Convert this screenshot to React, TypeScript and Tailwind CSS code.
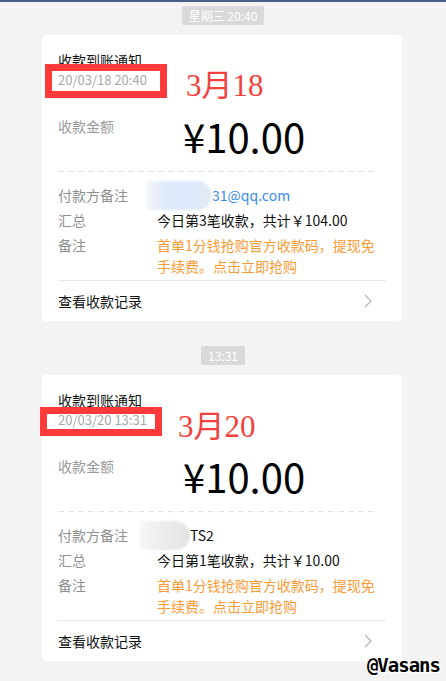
import React from "react";

type Notice = {
  time: string;
  date: string;
  mark: string;
  box: string;
  markPos: string;
  blob: string;
  payer: string;
  summary: string;
};

const NOTICES: Notice[] = [
  {
    time: "星期三 20:40",
    date: "20/03/18 20:40",
    mark: "3月18",
    box: "left-[3px] top-[29px] h-[34px]",
    markPos: "left-[144px] top-[33px]",
    blob: "-ml-[10px] w-[65px] bg-[linear-gradient(90deg,#f3f5f8_0%,#dde9fb_30%,#dde9fb_75%,#e6ebf2_100%)]",
    payer: "31@qq.com",
    summary: "今日第3笔收款，共计￥104.00",
  },
  {
    time: "13:31",
    date: "20/03/20 13:31",
    mark: "3月20",
    box: "-left-[2px] top-[32px] h-[29px]",
    markPos: "left-[136px] top-[34px]",
    blob: "-ml-[17px] w-[50px] bg-[linear-gradient(90deg,#f6f6f6_0%,#eeeeee_40%,#e4e4e4_100%)]",
    payer: "TS2",
    summary: "今日第1笔收款，共计￥10.00",
  },
];

function Row({ label, children }: { label: string; children: React.ReactNode }) {
  return (
    <div className="flex">
      <span className="w-[99px] shrink-0 text-[#8f8f8f]">{label}</span>
      <div className="flex-1">{children}</div>
    </div>
  );
}

function Card({ n }: { n: Notice }) {
  return (
    <div className="relative ml-[42px] w-[360px] self-start rounded-[4px] bg-white">
      {/* red annotation box */}
      <div className={`absolute z-0 w-[122px] border-[7px] border-[#ff3a3a] bg-white ${n.box}`} />
      <div
        className={`absolute z-10 font-['Liberation_Serif','Noto_Sans_CJK_SC',serif] text-[31px] leading-9 text-[#f2413d] ${n.markPos}`}
      >
        {n.mark}
      </div>

      <div className="px-4 pt-[15px]">
        <div className="text-[14px] leading-5 text-[#111]">收款到账通知</div>
        <div className="relative z-10 text-[13px] leading-5 text-[#a8a8a8]">{n.date}</div>

        <div className="mt-[26px] flex">
          <div className="w-[99px] text-[14px] leading-5 text-[#9a9a9a]">收款金额</div>
          <div className="pl-[26px] text-[40px] leading-10 text-black">¥10.00</div>
        </div>

        <div className="mt-[15px] mr-2 h-px bg-[repeating-linear-gradient(90deg,#e3e3e3_0_6px,transparent_6px_10px)]" />

        <div className="mt-[13px] flex flex-col gap-1 text-[14px] leading-[21px]">
          <Row label="付款方备注">
            <span className="flex h-[21px] items-center">
              <span className={`-my-1 h-[29px] shrink-0 rounded-r-full blur-[1px] ${n.blob}`} />
              <span className={n.payer.includes("@") ? "text-[#3b8cf0]" : "text-[#111]"}>{n.payer}</span>
            </span>
          </Row>
          <Row label="汇总">
            <span className="text-[#111]">{n.summary}</span>
          </Row>
          <Row label="备注">
            <span className="text-[#fa9a35]">首单1分钱抢购官方收款码，提现免手续费。点击立即抢购</span>
          </Row>
        </div>

        <div className="mt-[3px] border-t border-[#e8e8e8]" />

        <div className="flex h-10 items-center justify-between pr-[14px]">
          <span className="text-[14px] text-[#111]">查看收款记录</span>
          <svg width="8" height="14" viewBox="0 0 8 14" fill="none" aria-hidden>
            <path d="M1 1l6 6-6 6" stroke="#b4b4b4" strokeWidth="1.2" />
          </svg>
        </div>
      </div>
    </div>
  );
}

export default function App() {
  return (
    <div className="relative flex h-[681px] flex-col items-center overflow-hidden border-t-2 border-[#4b5d8d] bg-[#f3f3f3] font-['Noto_Sans_CJK_SC',sans-serif]">
      {NOTICES.map((n, i) => (
        <React.Fragment key={n.date}>
          <div
            className={`rounded-[2px] bg-[#d9d9d9] px-[7px] text-[12px] leading-[19px] text-white ${
              i === 0 ? "mt-1" : "mt-[25px]"
            }`}
          >
            {n.time}
          </div>
          <div className="mt-[10px] flex w-full flex-col">
            <Card n={n} />
          </div>
        </React.Fragment>
      ))}

      {/* watermark */}
      <div className="absolute bottom-[4px] right-[6px] font-['DejaVu_Sans_Mono',monospace] text-[19px] font-bold leading-6 tracking-[-1px] text-black [text-shadow:1px_1px_0_#fff,-1px_-1px_0_#fff,1px_-1px_0_#fff,-1px_1px_0_#fff]">
        @Vasans
      </div>
    </div>
  );
}
